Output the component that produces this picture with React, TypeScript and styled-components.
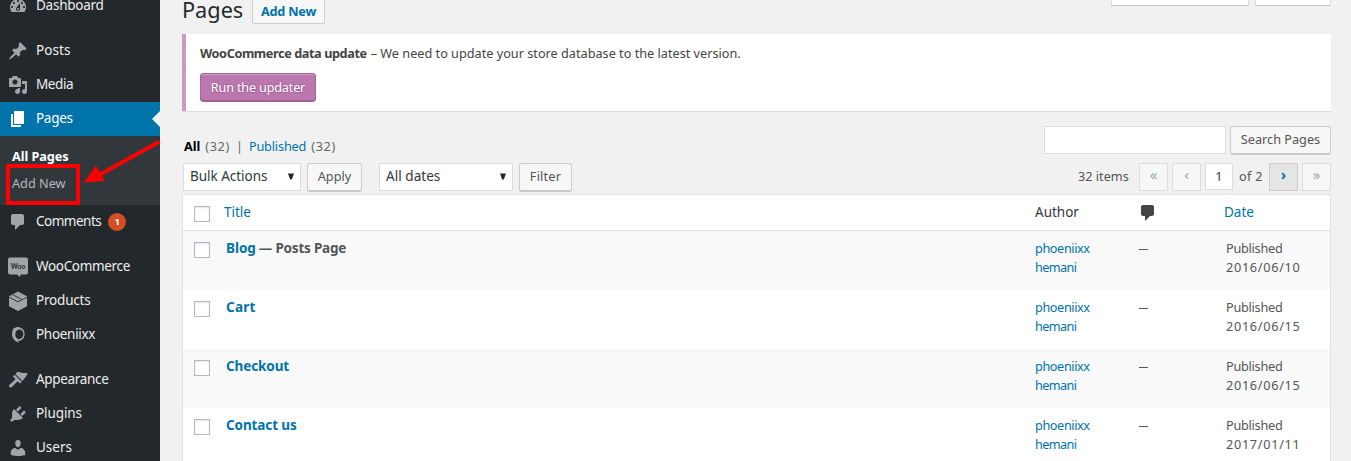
import React from "react";
import styled, { createGlobalStyle, css } from "styled-components";

const GlobalStyle = createGlobalStyle`
  * { box-sizing: border-box; }
  body {
    margin: 0;
    overflow: hidden;
    background: #f1f1f1;
    color: #444;
    font-family: "Noto Sans", "Open Sans", sans-serif;
    font-size: 12.7px;
  }
`;

const T = styled.span<{ $ls?: number }>`
  letter-spacing: ${(p) => p.$ls ?? 0}px;
  white-space: nowrap;
`;

const Shell = styled.div`
  display: flex;
  height: 461px;
  overflow: hidden;
`;

/* Sidebar */
const Sidebar = styled.nav`
  position: relative;
  flex: 0 0 160px;
  height: 472px;
  margin-top: -11px;
  background: #23282d;
`;

const MenuItem = styled.a<{ $active?: boolean; $gap?: boolean }>`
  position: relative;
  display: flex;
  height: 34px;
  margin-top: ${(p) => (p.$gap ? 11 : 0)}px;
  background: ${(p) => (p.$active ? "#0073aa" : "transparent")};
  color: ${(p) => (p.$active ? "#fff" : "#eee")};
  font-size: 13.5px;
  line-height: 32px;
  ${(p) =>
    p.$active &&
    css`
      &::after {
        content: "";
        position: absolute;
        right: 0;
        top: 9px;
        border: 8px solid transparent;
        border-left-width: 0;
        border-right-color: #f1f1f1;
      }
    `}
`;

const MenuIcon = styled.svg<{ $active?: boolean }>`
  flex: none;
  width: 20px;
  height: 20px;
  margin: 7px 8px 0;
  fill: ${(p) => (p.$active ? "#fff" : "#a0a5aa")};
`;

const Badge = styled.span`
  width: 18px;
  height: 18px;
  margin: 8px 0 0 7px;
  border-radius: 9px;
  background: #d54e21;
  color: #fff;
  font-size: 9.5px;
  font-weight: 700;
  line-height: 17px;
  text-align: center;
`;

const Submenu = styled.div`
  height: 69px;
  padding: 7px 12px;
  background: #32373c;
`;

const SubItem = styled.div<{ $current?: boolean }>`
  height: 27px;
  color: ${(p) => (p.$current ? "#fff" : "#b4b9be")};
  font-weight: ${(p) => (p.$current ? 700 : 400)};
  line-height: 27px;
`;

const Highlight = styled.div`
  position: absolute;
  left: 6px;
  top: 175px;
  width: 74px;
  height: 41px;
  border: 4px solid #fe0000;
`;

const Arrow = styled.svg`
  position: absolute;
  left: 80px;
  top: 147px;
  width: 80px;
  height: 52px;
`;

/* Content */
const Main = styled.main`
  flex: 1;
  display: flex;
  flex-direction: column;
  padding: 0 20px 0 22px;

  & > * {
    flex-shrink: 0;
  }
`;

const TopRow = styled.header`
  display: flex;
  align-items: flex-start;
  height: 34px;
`;

const Heading = styled.h1`
  width: 70px;
  margin: -5px 0 0 0;
  color: #23282d;
  font-size: 21.7px;
  font-weight: 400;
  line-height: 30px;
`;

const AddButton = styled.a`
  height: 26px;
  width: 73px;
  margin-top: -2px;
  border: 1px solid #ccc;
  border-radius: 2px;
  background: #f7f7f7;
  color: #0073aa;
  font-weight: 700;
  line-height: 24px;
  text-align: center;
`;

const ScreenTab = styled.div<{ $w: number; $first?: boolean }>`
  width: ${(p) => p.$w}px;
  height: 6px;
  margin-left: ${(p) => (p.$first ? "auto" : "6px")};
  border: 1px solid #ddd;
  border-top: 0;
  border-bottom-color: #c4c4c4;
  background: #fff;
`;

const Notice = styled.section`
  height: 77px;
  padding: 10px 14px;
  border-left: 4px solid #cc99c2;
  background: #fff;
  box-shadow: 0 1px 1px rgba(0, 0, 0, 0.08);
`;

const NoticeText = styled.p`
  display: flex;
  gap: 4px;
  margin: 0 0 10px;
  line-height: 19px;
`;

const PrimaryButton = styled.button`
  display: block;
  width: 116px;
  height: 29px;
  padding: 0 0 2px;
  border: 1px solid #a36597;
  border-radius: 3px;
  background: #bb77ae;
  box-shadow: inset 0 1px 0 rgba(255, 255, 255, 0.25), inset 0 -1px 0 #a36597;
  color: #fff;
  font: inherit;
  text-shadow: 0 -1px 1px #a36597, 1px 0 1px #a36597, 0 1px 1px #a36597;
`;

const FilterRow = styled.div<{ $tall?: boolean }>`
  display: flex;
  justify-content: space-between;
  height: ${(p) => (p.$tall ? 31 : 37)}px;
  margin-top: ${(p) => (p.$tall ? 0 : 15)}px;
`;

const Views = styled.div`
  display: flex;
  margin: 10px 0 0 2px;
  color: #666;
  line-height: 20px;
`;

const Current = styled(T)`
  color: #000;
  font-weight: 700;
`;

const Link = styled(T)`
  color: #0073aa;
`;

const Count = styled(T)`
  margin-left: 5px;
`;

const Divider = styled.span`
  margin: 0 6px;
`;

const Group = styled.div`
  display: flex;
  align-items: flex-start;
`;

const Button = styled.button<{ $w: number; $ml?: number }>`
  width: ${(p) => p.$w}px;
  height: 29px;
  margin-left: ${(p) => p.$ml ?? 0}px;
  padding: 0 0 2px;
  border: 1px solid #ccc;
  border-bottom: 2px solid #c8c8c8;
  border-radius: 3px;
  background: #f7f7f7;
  color: #555;
  font: inherit;
`;

const Select = styled.div<{ $w: number; $ml: number }>`
  display: flex;
  align-items: center;
  justify-content: space-between;
  width: ${(p) => p.$w}px;
  height: 28px;
  margin-left: ${(p) => p.$ml}px;
  padding: 0 6px 2px 6px;
  border: 1px solid #ddd;
  background: #fff;
  color: #32373c;
  font-size: 13.5px;
`;

const Caret = styled.svg`
  width: 6px;
  height: 7px;
  margin-top: 1px;
  fill: #23282d;
`;

const SearchInput = styled.input`
  width: 182px;
  height: 28px;
  border: 1px solid #ddd;
  background: #fff;
`;

const PageLabel = styled(T)<{ $w: number }>`
  width: ${(p) => p.$w}px;
  color: #555;
  line-height: 26px;
`;

const PageButton = styled.span<{ $enabled?: boolean; $ml?: number }>`
  width: 29px;
  height: 28px;
  margin-left: ${(p) => p.$ml ?? 4}px;
  border: 1px solid ${(p) => (p.$enabled ? "#ccc" : "#ddd")};
  background: ${(p) => (p.$enabled ? "#e5e5e5" : "#f7f7f7")};
  color: ${(p) => (p.$enabled ? "#0073aa" : "#a0a5aa")};
  font-size: 15px;
  font-weight: ${(p) => (p.$enabled ? 700 : 400)};
  line-height: 21px;
  text-align: center;
`;

const PageInput = styled.span`
  width: 28px;
  height: 27px;
  margin: 0 6px 0 4px;
  border: 1px solid #ddd;
  background: #fff;
  color: #32373c;
  line-height: 24px;
  text-align: center;
`;

const Table = styled.section`
  border: 1px solid #e1e1e1;
  border-bottom: 0;
`;

const Row = styled.div<{ $striped?: boolean }>`
  display: grid;
  grid-template-columns: 41px 811px 104px 85px 1fr;
  height: 59px;
  padding-top: 8px;
  background: ${(p) => (p.$striped ? "#f9f9f9" : "#fff")};
  color: #555;
  line-height: 19px;
`;

const HeadRow = styled(Row)`
  height: 36px;
  border-bottom: 1px solid #e1e1e1;
  color: #32373c;
  font-size: 13.5px;
`;

const Check = styled.span`
  width: 16px;
  height: 16px;
  margin: 3px 0 0 11px;
  border: 1px solid #b4b9be;
  background: #fff;
  box-shadow: inset 0 1px 2px rgba(0, 0, 0, 0.1);
`;

const Title = styled.div`
  display: flex;
  gap: 3px;
  padding-left: 2px;
  font-size: 13.5px;
  font-weight: 700;
`;

const Lines = styled.div<{ $indent?: boolean }>`
  display: flex;
  flex-direction: column;
  padding-left: ${(p) => (p.$indent ? 2 : 0)}px;
`;

const Dash = styled.span`
  width: 9px;
  height: 1px;
  margin-top: 10px;
  background: #555;
`;

const HeadIcon = styled.svg`
  width: 20px;
  height: 20px;
  margin: 0 0 0 -1px;
  fill: #444;
`;

const COMMENT = "M5 2h9c1.1 0 2 .9 2 2v7c0 1.1-.9 2-2 2h-2l-5 5v-5H5c-1.1 0-2-.9-2-2V4c0-1.1.9-2 2-2z";

const ICONS: Record<string, React.ReactNode> = {
  dashboard: <path fillRule="evenodd" d="M3.76 16h12.48c1.1-1.37 1.76-3.11 1.76-5 0-4.42-3.58-8-8-8s-8 3.58-8 8c0 1.89.66 3.63 1.76 5zM10 4c.55 0 1 .45 1 1s-.45 1-1 1-1-.45-1-1 .45-1 1-1zM6 6c.55 0 1 .45 1 1s-.45 1-1 1-1-.45-1-1 .45-1 1-1zm8 0c.55 0 1 .45 1 1s-.45 1-1 1-1-.45-1-1 .45-1 1-1zm-5.37 5.55L12 7v6c0 1.1-.9 2-2 2s-2-.9-2-2c0-.57.24-1.08.63-1.45zM4 10c.55 0 1 .45 1 1s-.45 1-1 1-1-.45-1-1 .45-1 1-1zm12 0c.55 0 1 .45 1 1s-.45 1-1 1-1-.45-1-1 .45-1 1-1zm-5 3c0-.55-.45-1-1-1s-1 .45-1 1 .45 1 1 1 1-.45 1-1z" />,
  post: <path d="M10.44 3.02l1.82-1.82 6.36 6.35-1.83 1.82c-1.05-.68-2.48-.57-3.41.36l-.75.75c-.92.93-1.04 2.35-.35 3.41l-1.83 1.82-2.41-2.41-2.8 2.79c-.42.42-3.38 2.71-3.8 2.29s1.86-3.39 2.28-3.81l2.79-2.79L4.1 9.36l1.83-1.82c1.05.69 2.48.57 3.4-.36l.75-.75c.93-.92 1.05-2.35.36-3.41z" />,
  media: <path fillRule="evenodd" d="M13 11V4c0-.55-.45-1-1-1h-1.67L9 1H5L3.67 3H2c-.55 0-1 .45-1 1v7c0 .55.45 1 1 1h10c.55 0 1-.45 1-1zM7 4.5c1.38 0 2.5 1.12 2.5 2.5S8.38 9.5 7 9.5 4.5 8.38 4.5 7 5.62 4.5 7 4.5zM14 6h5v10.5c0 1.38-1.12 2.5-2.5 2.5S14 17.88 14 16.5s1.12-2.5 2.5-2.5c.17 0 .34.02.5.05V9h-3V6zm-4 8.05V13h2v3.5c0 1.38-1.12 2.5-2.5 2.5S7 17.88 7 16.5 8.12 14 9.5 14c.17 0 .34.02.5.05z" />,
  page: <path d="M6 15V2h10v13H6zm-1 1h8v2H3V5h2v11z" />,
  comments: <path d={COMMENT} />,
  woo: (
    <>
      <path d="M2 .5h16a2 2 0 0 1 2 2v13a2 2 0 0 1-2 2h-5.500l-.5 2.500-3-2.500H2a2 2 0 0 1-2-2v-13a2 2 0 0 1 2-2z" />
      <text x="10" y="12.200" textAnchor="middle" fill="#23282d" fontSize="7.800" fontWeight="700" fontFamily="Lato, sans-serif" textLength="14.500" lengthAdjust="spacingAndGlyphs">Woo</text>
    </>
  ),
  products: (
    <>
      <path d="M10 .5l9 4.800v10L10 20l-9-4.700v-10z" />
      <path d="M1 6.200l9 4.600 9-4.600M4.800 3.800l8.700 4.500M7.600 2.200" fill="none" stroke="#23282d" strokeWidth=".9" />
    </>
  ),
  phoeniixx: (
    <>
      <path fillRule="evenodd" d="M10.500 2.300C6.500 2.300 4 5 4 9c0 4 2.600 7.800 7.400 8.700-.9-.6-1.400-1.300-1.500-2 4.100.4 6.700-2.700 6.700-6.500 0-2.900-.9-5.400-3.200-6.300.5.500.8.900.9 1.200-1.100-.9-2.200-1.800-3.800-1.800zM11.300 4.500c2.500 0 4 1.900 4 4.500 0 2.800-1.900 5-4.300 5-2.300 0-3.700-1.900-3.700-4.600 0-2.700 1.500-4.900 4-4.900z" />
      <path d="M4.500 4.800C6.200 2.600 9 1.800 12.300 2.200 9.300 3 6.800 4.500 5.800 8z" />
    </>
  ),
  appearance: <path d="M14.480 11.060L7.410 3.990l1.500-1.500c.5-.56 2.300-.47 3.510-.1 1.900.5 4.100.900 6.880.500.3 1.100-.4 2-1.300 3.500zM13.770 11.770L6.700 4.700 4.930 6.470l2.500 2.700L1.300 14.900c-.6.700-.5 1.600.1 2.200s1.500.7 2.200.100l6-6 2.600 2.300z" />,
  plugins: <path d="M13.110 4.360L9.870 7.600 8 5.730l3.240-3.240c.35-.34 1.050-.2 1.560.32.52.51.66 1.210.31 1.550zm-8 1.770l.91-1.120 9.010 9.010-1.190.84c-.71.71-2.630 1.160-3.820 1.160H6.140L4.900 17.260c-.59.59-1.540.59-2.120 0-.59-.58-.59-1.530 0-2.120l1.240-1.240v-3.880c0-1.130.4-3.190 1.090-3.890zm7.260 3.970l3.240-3.240c.34-.35 1.040-.21 1.550.31.52.51.66 1.210.31 1.550l-3.240 3.250z" />,
  users: <path d="M10 9.250c-2.270 0-2.730-3.440-2.730-3.440C7 4.020 7.820 2 9.970 2c2.160 0 2.980 2.020 2.710 3.810 0 0-.41 3.440-2.680 3.440zm0 2.570L12.720 10c2.390 0 4.520 2.330 4.520 4.530v2.490s-3.650 1.130-7.240 1.130c-3.650 0-7.240-1.130-7.240-1.130v-2.490c0-2.250 1.940-4.480 4.470-4.480z" />,
};

interface EntryProps {
  icon: string;
  label: string;
  ls: number;
  active?: boolean;
  gap?: boolean;
  badge?: number;
}

const Entry = ({ icon, label, ls, active, gap, badge }: EntryProps) => (
  <MenuItem $active={active} $gap={gap}>
    <MenuIcon viewBox="0 0 20 20" $active={active}>{ICONS[icon]}</MenuIcon>
    <T $ls={ls}>{label}</T>
    {badge && <Badge>{badge}</Badge>}
  </MenuItem>
);

const DownCaret = () => (
  <Caret viewBox="0 0 6 7"><path d="M0 .5h6L3.800 6.500H2.200z" /></Caret>
);

const PAGES = [
  { title: "Blog", ls: -0.05, state: "— Posts Page", date: "2016/06/10" },
  { title: "Cart", ls: 0.25, date: "2016/06/15" },
  { title: "Checkout", ls: -0.1, date: "2016/06/15" },
  { title: "Contact us", ls: -0.1, date: "2017/01/11" },
];

export default function App() {
  return (
    <>
      <GlobalStyle />
      <Shell>
        <Sidebar>
          <Entry icon="dashboard" label="Dashboard" ls={-0.25} />
          <Entry icon="post" label="Posts" ls={0.1} gap />
          <Entry icon="media" label="Media" ls={-0.4} />
          <Entry icon="page" label="Pages" ls={-0.3} active />
          <Submenu>
            <SubItem $current><T $ls={-0.05}>All Pages</T></SubItem>
            <SubItem><T $ls={0}>Add New</T></SubItem>
          </Submenu>
          <Entry icon="comments" label="Comments" ls={-0.5} badge={1} />
          <Entry icon="woo" label="WooCommerce" ls={-0.33} gap />
          <Entry icon="products" label="Products" ls={-0.2} />
          <Entry icon="phoeniixx" label="Phoeniixx" ls={-0.3} />
          <Entry icon="appearance" label="Appearance" ls={-0.33} gap />
          <Entry icon="plugins" label="Plugins" ls={-0.1} />
          <Entry icon="users" label="Users" ls={0} />
          <Highlight />
          <Arrow viewBox="0 0 80 52">
            <path d="M21 38L78 6.500" stroke="#fe0000" strokeWidth="4" strokeLinecap="round" />
            <path d="M4 46.500L16 29.500 25 45z" fill="#fe0000" />
          </Arrow>
        </Sidebar>
        <Main>
          <TopRow>
            <Heading>Pages</Heading>
            <AddButton><T $ls={-0.2}>Add New</T></AddButton>
            <ScreenTab $w={138} $first />
            <ScreenTab $w={76} />
          </TopRow>
          <Notice>
            <NoticeText>
              <T as="strong" $ls={-0.41}>WooCommerce data update</T>
              <T $ls={0}>– We need to update your store database to the latest version.</T>
            </NoticeText>
            <PrimaryButton><T $ls={-0.2}>Run the updater</T></PrimaryButton>
          </Notice>
          <FilterRow>
            <Views>
              <Current>All</Current>
              <Count $ls={0.6}>(32)</Count>
              <Divider>|</Divider>
              <Link $ls={-0.15}>Published</Link>
              <Count $ls={0.6}>(32)</Count>
            </Views>
            <Group>
              <SearchInput />
              <Button $w={101} $ml={4}><T $ls={0}>Search Pages</T></Button>
            </Group>
          </FilterRow>
          <FilterRow $tall>
            <Group>
              <Select $w={118} $ml={1}><T $ls={-0.03}>Bulk Actions</T><DownCaret /></Select>
              <Button $w={55} $ml={6}><T $ls={0}>Apply</T></Button>
              <Select $w={134} $ml={17}><T $ls={0.05}>All dates</T><DownCaret /></Select>
              <Button $w={53} $ml={6}><T $ls={0.2}>Filter</T></Button>
            </Group>
            <Group>
              <PageLabel $w={61} $ls={0}>32 items</PageLabel>
              <PageButton $ml={0}>«</PageButton>
              <PageButton>‹</PageButton>
              <PageInput>1</PageInput>
              <PageLabel $w={26} $ls={0.3}>of 2</PageLabel>
              <PageButton $enabled>›</PageButton>
              <PageButton>»</PageButton>
            </Group>
          </FilterRow>
          <Table>
            <HeadRow>
              <Check />
              <Link $ls={0}>Title</Link>
              <T $ls={0}>Author</T>
              <HeadIcon viewBox="0 0 20 20"><path d={COMMENT} /></HeadIcon>
              <Link $ls={0}>Date</Link>
            </HeadRow>
            {PAGES.map((page, i) => (
              <Row key={page.title} $striped={i % 2 === 0}>
                <Check />
                <Title>
                  <Link $ls={page.ls}>{page.title}</Link>
                  {page.state && <T $ls={-0.2}>{page.state}</T>}
                </Title>
                <Lines>
                  <Link $ls={-0.4}>phoeniixx</Link>
                  <Link $ls={-0.6}>hemani</Link>
                </Lines>
                <Dash />
                <Lines $indent>
                  <T $ls={-0.25}>Published</T>
                  <T $ls={0.7}>{page.date}</T>
                </Lines>
              </Row>
            ))}
          </Table>
        </Main>
      </Shell>
    </>
  );
}
